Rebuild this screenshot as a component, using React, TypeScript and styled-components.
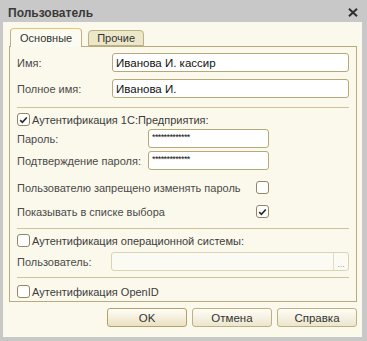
import styled, { createGlobalStyle } from 'styled-components';

const GlobalStyle = createGlobalStyle`
  body {
    margin: 0;
    font-family: "Liberation Sans", Arial, sans-serif;
    font-size: 11px;
  }
`;

const Window = styled.div`
  width: 367px;
  height: 341px;
  box-sizing: border-box;
  padding: 0 5px 4px 3px;
  display: flex;
  flex-direction: column;
  background: #c8c8c8;
`;

const TitleBar = styled.div`
  height: 22px;
  box-sizing: border-box;
  padding: 3px 4px 0 5px;
  display: flex;
  align-items: center;
  justify-content: space-between;
`;

const Title = styled.span`
  font-size: 12px;
  font-weight: bold;
  color: #3a3a3a;
`;

const Body = styled.div`
  flex: 1;
  padding: 6px 5px 0 6px;
  display: flex;
  flex-direction: column;
  background: #fbf9eb;
`;

const Tabs = styled.div`
  display: flex;
  align-items: flex-end;
  gap: 6px;
  padding-left: 1px;
  margin-bottom: -1px;
  position: relative;
  z-index: 1;
`;

const Tab = styled.div<{ $active?: boolean }>`
  box-sizing: border-box;
  height: ${p => (p.$active ? '19px' : '16px')};
  margin-bottom: ${p => (p.$active ? '0' : '1px')};
  padding: 0 ${p => (p.$active ? '9px' : '8px')};
  display: flex;
  align-items: center;
  border: 1px solid #bcb084;
  border-top-color: ${p => (p.$active ? '#f0c36e' : '#bcb084')};
  border-bottom: ${p => (p.$active ? 'none' : '1px solid #bcb084')};
  border-radius: 4px 4px 0 0;
  background: ${p => (p.$active ? '#fcfbf1' : '#ede7c9')};
  color: #333;
  font-size: 11px;
`;

const Panel = styled.div`
  border: 1px solid #b8ac7f;
  padding: 0 7px;
  display: flex;
  flex-direction: column;
`;

const Row = styled.div<{ $top: number }>`
  height: 19px;
  margin-top: ${p => p.$top}px;
  display: flex;
  align-items: center;
`;

const Label = styled.span<{ $width?: number }>`
  width: ${p => (p.$width ? `${p.$width}px` : 'auto')};
  flex-shrink: 0;
  color: #4a4a4a;
  white-space: nowrap;
`;

const Field = styled.div<{ $width?: number }>`
  box-sizing: border-box;
  height: 19px;
  ${p => (p.$width ? `width: ${p.$width}px;` : 'flex: 1;')}
  padding: 0 3px;
  display: flex;
  align-items: center;
  border: 1px solid #b5a97a;
  border-radius: 3px;
  background: #fff;
  color: #111;
  font-size: 11.5px;
`;

const Secret = styled.span`
  font-size: 9px;
  letter-spacing: -0.6px;
  color: #111;
  margin-top: -4px;
`;

const DisabledField = styled.div`
  box-sizing: border-box;
  height: 19px;
  flex: 1;
  display: flex;
  justify-content: flex-end;
  border: 1px solid #dad3b4;
  border-radius: 3px;
  background: #fbfaf3;
`;

const PickButton = styled.div`
  width: 14px;
  border-left: 1px solid #e2dcc2;
  display: flex;
  align-items: flex-end;
  justify-content: center;
  color: #a09a86;
  font-size: 9px;
  line-height: 12px;
`;

const Separator = styled.div<{ $top: number }>`
  height: 1px;
  margin-top: ${p => p.$top}px;
  background: #cdc49d;
`;

const Box = styled.span`
  box-sizing: border-box;
  width: 13px;
  height: 13px;
  flex-shrink: 0;
  display: flex;
  align-items: center;
  justify-content: center;
  border: 1px solid #8f8766;
  border-radius: 3px;
  background: #fff;
`;

const CheckLabel = styled.span`
  margin-left: 2px;
  color: #3c3c3c;
`;

const Buttons = styled.div`
  margin-top: 6px;
  display: flex;
  justify-content: flex-end;
  gap: 5px;
`;

const Button = styled.div<{ $default?: boolean }>`
  box-sizing: border-box;
  width: 80px;
  height: 19px;
  display: flex;
  align-items: center;
  justify-content: center;
  border: 1px solid ${p => (p.$default ? '#b59f6c' : '#bcb084')};
  border-radius: 3px;
  background: linear-gradient(#fefdf7, ${p => (p.$default ? '#ebe1c2' : '#ece6cd')});
  color: #333;
  font-size: 11.5px;
`;

const Checkbox = ({ checked }: { checked?: boolean }) => (
  <Box>
    {checked && (
      <svg width="9" height="8" viewBox="0 0 9 8">
        <path d="M1.2 4.2 L3.4 6.3 L7.8 1.5" fill="none" stroke="#2b2b2b" strokeWidth="1.7" />
      </svg>
    )}
  </Box>
);

const CloseIcon = () => (
  <svg width="10" height="9" viewBox="0 0 10 9">
    <path d="M1 0.8 L9 8.2 M9 0.8 L1 8.2" stroke="#2f2f2f" strokeWidth="2" />
  </svg>
);

export default function App() {
  return (
    <>
      <GlobalStyle />
      <Window>
        <TitleBar>
          <Title>Пользователь</Title>
          <CloseIcon />
        </TitleBar>
        <Body>
          <Tabs>
            <Tab $active>Основные</Tab>
            <Tab>Прочие</Tab>
          </Tabs>
          <Panel>
            <Row $top={6}>
              <Label $width={95}>Имя:</Label>
              <Field>Иванова И. кассир</Field>
            </Row>
            <Row $top={7}>
              <Label $width={95}>Полное имя:</Label>
              <Field>Иванова И.</Field>
            </Row>
            <Separator $top={9} />
            <Row $top={2}>
              <Checkbox checked />
              <CheckLabel>Аутентификация 1С:Предприятия:</CheckLabel>
            </Row>
            <Row $top={0}>
              <Label $width={131}>Пароль:</Label>
              <Field $width={121}><Secret>*************</Secret></Field>
            </Row>
            <Row $top={3}>
              <Label $width={131}>Подтверждение пароля:</Label>
              <Field $width={121}><Secret>*************</Secret></Field>
            </Row>
            <Row $top={8}>
              <Label $width={239}>Пользователю запрещено изменять пароль</Label>
              <Checkbox />
            </Row>
            <Row $top={5}>
              <Label $width={239}>Показывать в списке выбора</Label>
              <Checkbox checked />
            </Row>
            <Separator $top={7} />
            <Row $top={2}>
              <Checkbox />
              <CheckLabel>Аутентификация операционной системы:</CheckLabel>
            </Row>
            <Row $top={2}>
              <Label $width={94}>Пользователь:</Label>
              <DisabledField>
                <PickButton>...</PickButton>
              </DisabledField>
            </Row>
            <Separator $top={6} />
            <Row $top={4}>
              <Checkbox />
              <CheckLabel>Аутентификация OpenID</CheckLabel>
            </Row>
          </Panel>
          <Buttons>
            <Button $default>OK</Button>
            <Button>Отмена</Button>
            <Button>Справка</Button>
          </Buttons>
        </Body>
      </Window>
    </>
  );
}
